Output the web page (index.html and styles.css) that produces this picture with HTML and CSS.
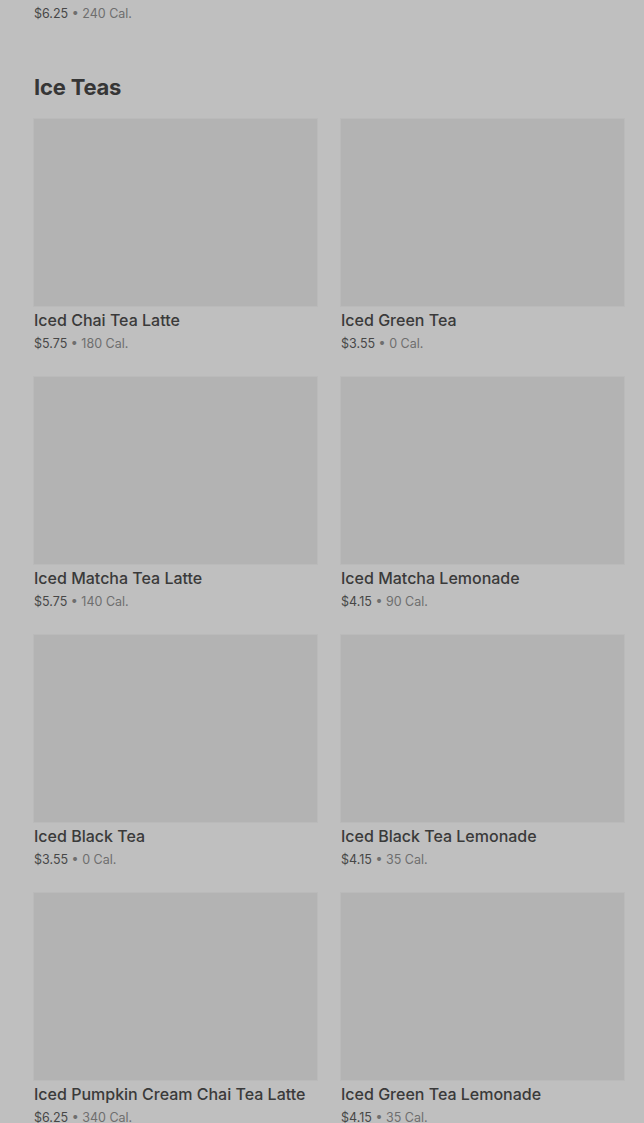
FILE: index.html
```html
<!DOCTYPE html>
<html lang="en">

<head>
    <meta charset="UTF-8">
    <title>Menu</title>
    <link rel="stylesheet" href="styles.css">
</head>

<body>
    <div class="menu">
        <p class="meta prev-meta"><span class="price">$6.25</span> • <span class="cal">240 Cal.</span></p>

        <section class="category">
            <h2>Ice Teas</h2>
            <ul class="item-grid">
                <li class="item">
                    <div class="item-img"></div>
                    <p class="item-name">Iced Chai Tea Latte</p>
                    <p class="meta"><span class="price">$5.75</span> • <span class="cal">180 Cal.</span></p>
                </li>
                <li class="item">
                    <div class="item-img"></div>
                    <p class="item-name">Iced Green Tea</p>
                    <p class="meta"><span class="price">$3.55</span> • <span class="cal">0 Cal.</span></p>
                </li>
                <li class="item">
                    <div class="item-img"></div>
                    <p class="item-name">Iced Matcha Tea Latte</p>
                    <p class="meta"><span class="price">$5.75</span> • <span class="cal">140 Cal.</span></p>
                </li>
                <li class="item">
                    <div class="item-img"></div>
                    <p class="item-name">Iced Matcha Lemonade</p>
                    <p class="meta"><span class="price">$4.15</span> • <span class="cal">90 Cal.</span></p>
                </li>
                <li class="item">
                    <div class="item-img"></div>
                    <p class="item-name">Iced Black Tea</p>
                    <p class="meta"><span class="price">$3.55</span> • <span class="cal">0 Cal.</span></p>
                </li>
                <li class="item">
                    <div class="item-img"></div>
                    <p class="item-name">Iced Black Tea Lemonade</p>
                    <p class="meta"><span class="price">$4.15</span> • <span class="cal">35 Cal.</span></p>
                </li>
                <li class="item">
                    <div class="item-img"></div>
                    <p class="item-name">Iced Pumpkin Cream Chai Tea Latte</p>
                    <p class="meta"><span class="price">$6.25</span> • <span class="cal">340 Cal.</span></p>
                </li>
                <li class="item">
                    <div class="item-img"></div>
                    <p class="item-name">Iced Green Tea Lemonade</p>
                    <p class="meta"><span class="price">$4.15</span> • <span class="cal">35 Cal.</span></p>
                </li>
            </ul>
        </section>
    </div>
</body>

</html>
```

FILE: styles.css
```css
* {
    box-sizing: border-box;
}

body {
    margin: 0;
    background: #bfbfbf;
    font-family: Inter, "Liberation Sans", sans-serif;
    color: #3a3a3a;
}

.menu {
    padding: 4px 20px 0 34px;
}

.meta {
    margin: 0;
    font-size: 12.5px;
    line-height: 20px;
    color: #6e6e6e;
}

.meta .price {
    color: #474747;
}

.category h2 {
    margin: 49px 0 18px;
    font-size: 22px;
    line-height: 28px;
    font-weight: 700;
    color: #363636;
    letter-spacing: -0.2px;
}

.item-grid {
    margin: 0;
    padding: 0;
    list-style: none;
    display: grid;
    grid-template-columns: 283px 283px;
    column-gap: 24px;
    row-gap: 23px;
}

.item-img {
    height: 187px;
    background: #b3b3b3;
    box-shadow: 0 0 0 1px #bababa;
}

.item-name {
    margin: 4px 0 0;
    font-size: 16px;
    line-height: 20px;
    font-weight: 500;
    color: #3a3a3a;
    white-space: nowrap;
}

.item .meta {
    margin-top: 4px;
}
```
